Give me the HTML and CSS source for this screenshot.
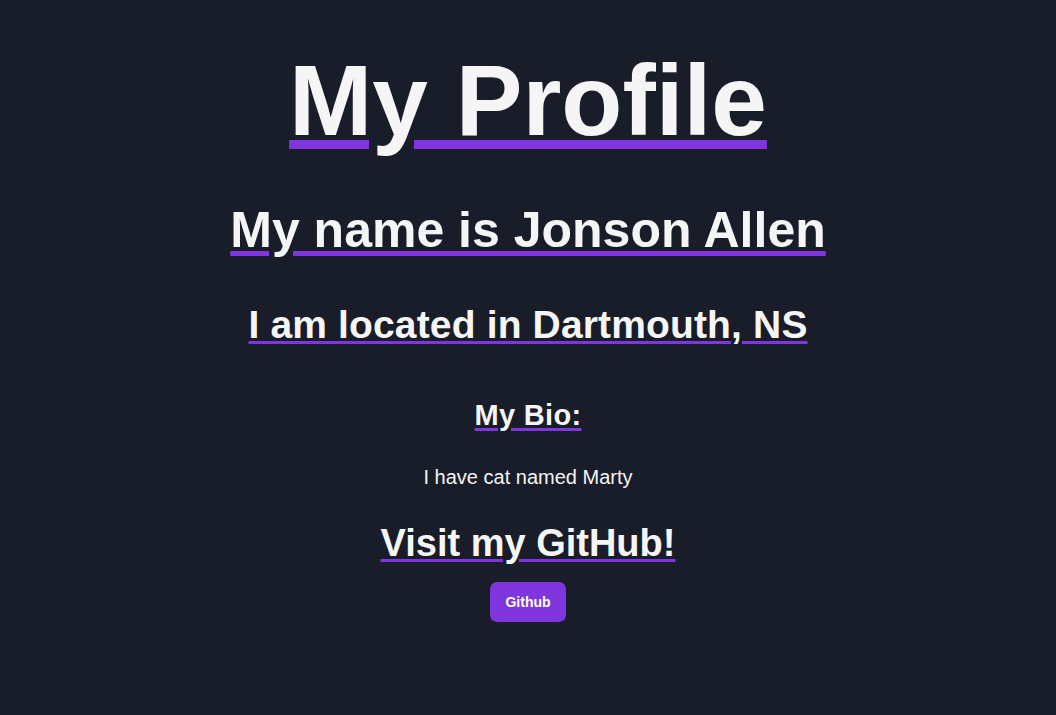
FILE: index.html
```html
<!DOCTYPE html>
<html lang="en">
<head>
<meta charset="utf-8">
<title>My Profile</title>
<link rel="stylesheet" href="styles.css">
</head>
<body>
<main class="profile">
  <h1 class="title">My Profile</h1>
  <h2 class="name">My name is Jonson Allen</h2>
  <h3 class="location">I am located in Dartmouth, NS</h3>
  <h4 class="bio-heading">My Bio:</h4>
  <p class="bio">I have cat named Marty</p>
  <h3 class="visit">Visit my GitHub!</h3>
  <a class="btn" href="#">Github</a>
</main>
</body>
</html>
```

FILE: styles.css
```css
html, body {
  margin: 0;
  padding: 0;
  background: #191c29;
  height: 100%;
}
body {
  font-family: "Liberation Sans", Arial, Helvetica, sans-serif;
  color: #f5f5f5;
}
.profile {
  display: flex;
  flex-direction: column;
  align-items: center;
  text-align: center;
}
.profile h1, .profile h2, .profile h3, .profile h4, .profile p {
  margin: 0;
  line-height: 1;
}
.title, .name, .location, .bio-heading, .visit {
  font-weight: 700;
  text-decoration-line: underline;
  text-decoration-color: #7f36dc;
  text-decoration-skip-ink: auto;
}
.profile .title {
  font-size: 100px;
  margin-top: 50px;
  text-decoration-thickness: 9px;
  text-underline-offset: 5px;
}
.profile .name {
  font-size: 50px;
  margin-top: 55px;
  text-decoration-thickness: 5px;
  text-underline-offset: 4px;
}
.profile .location {
  font-size: 39px;
  letter-spacing: 0.15px;
  margin-top: 50px;
  text-decoration-thickness: 3px;
  text-underline-offset: 3px;
}
.profile .bio-heading {
  font-size: 29px;
  letter-spacing: 0.3px;
  margin-top: 57px;
  text-decoration-thickness: 3px;
  text-underline-offset: 3px;
}
.profile .bio {
  font-size: 20px;
  margin-top: 37px;
}
.profile .visit {
  font-size: 38px;
  margin-top: 37px;
  text-decoration-thickness: 3px;
  text-underline-offset: 3px;
}
.btn {
  margin-top: 20px;
  display: inline-flex;
  align-items: center;
  justify-content: center;
  height: 40px;
  padding: 0 15px;
  box-sizing: border-box;
  background: #7f36dc;
  color: #ffffff;
  font-size: 14px;
  font-weight: 700;
  border-radius: 7px;
  text-decoration: none;
}
```
